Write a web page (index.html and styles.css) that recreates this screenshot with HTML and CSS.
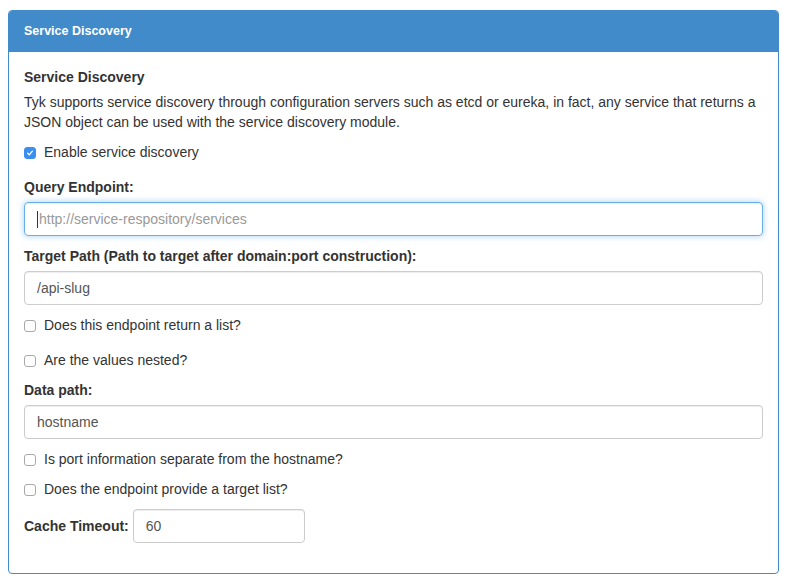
FILE: index.html
```html
<!DOCTYPE html>
<html>
<head>
<meta charset="utf-8">
<link rel="stylesheet" href="styles.css">
</head>
<body>
<div class="panel">
  <div class="panel-heading">Service Discovery</div>
  <div class="panel-body">
    <h4 class="sub">Service Discovery</h4>
    <p class="desc">Tyk supports service discovery through configuration servers such as etcd or eureka, in fact, any service that returns a JSON object can be used with the service discovery module.</p>
    <div class="check first"><span class="box checked"><svg viewBox="0 0 12 12" width="12" height="12"><path d="M3.2 6.2 L5.2 8.2 L8.8 3.8" fill="none" stroke="#fff" stroke-width="1.6" stroke-linecap="round" stroke-linejoin="round"/></svg></span><span>Enable service discovery</span></div>
    <label class="lbl lbl-query">Query Endpoint:</label>
    <div class="input focus"><span class="caret"></span><span class="ph">http://service-respository/services</span></div>
    <label class="lbl">Target Path (Path to target after domain:port construction):</label>
    <div class="input">/api-slug</div>
    <div class="check"><span class="box"></span><span>Does this endpoint return a list?</span></div>
    <div class="check nested"><span class="box"></span><span>Are the values nested?</span></div>
    <label class="lbl">Data path:</label>
    <div class="input">hostname</div>
    <div class="check"><span class="box"></span><span>Is port information separate from the hostname?</span></div>
    <div class="check"><span class="box"></span><span>Does the endpoint provide a target list?</span></div>
    <div class="inline">
      <label class="lbl inline-lbl">Cache Timeout:</label>
      <div class="input small">60</div>
    </div>
  </div>
</div>
</body>
</html>
```
FILE: styles.css
```css
* { box-sizing: border-box; }
body {
  margin: 0;
  padding: 10px 13px 0 8px;
  background: #fff;
  font-family: "Liberation Sans", Arial, sans-serif;
  font-size: 14px;
  line-height: 20px;
  color: #333;
}
.panel {
  border: 1px solid #428bca;
  border-radius: 4px;
  background: #fff;
}
.panel-heading {
  background: #428bca;
  color: #fff;
  font-weight: bold;
  font-size: 12.5px;
  height: 41px;
  line-height: 41px;
  padding: 0 15px;
  border-radius: 3px 3px 0 0;
}
.panel-body {
  padding: 15px 15px 30px 15px;
}
.sub {
  margin: 0 0 5px;
  font-size: 14px;
  line-height: 20px;
  font-weight: bold;
}
.desc { margin: 0; }
.check {
  display: flex;
  align-items: center;
  height: 20px;
  margin-top: 10px;
}
.check.nested { margin-top: 15px; }
.box {
  width: 12px;
  height: 12px;
  border: 1px solid #a9a9a9;
  border-radius: 3px;
  background: #fff;
  margin-right: 8px;
  margin-top: 1px;
  display: flex;
  align-items: center;
  justify-content: center;
  flex: none;
}
.box.checked {
  background: #3b8ff0;
  border-color: #3b8ff0;
}
.box svg { display: block; }
.lbl {
  display: block;
  font-weight: bold;
  margin-top: 10px;
  margin-bottom: 5px;
  line-height: 20px;
}
.lbl-query { margin-top: 15px; }
.input {
  height: 34px;
  border: 1px solid #ccc;
  border-radius: 4px;
  padding: 6px 12px;
  color: #555;
  font-size: 14px;
  line-height: 20px;
  box-shadow: inset 0 1px 1px rgba(0,0,0,0.075);
  display: flex;
  align-items: center;
}
.input.focus {
  border-color: #66afe9;
  box-shadow: inset 0 1px 1px rgba(0,0,0,0.075), 0 0 6px rgba(102,175,233,0.6);
}
.caret {
  width: 1px;
  height: 17px;
  background: #333;
  margin-right: 1px;
}
.ph { color: #999; }
.inline {
  display: flex;
  align-items: center;
  margin-top: 10px;
}
.inline-lbl {
  margin: 0 4px 0 0;
}
.input.small { width: 172px; }
```
